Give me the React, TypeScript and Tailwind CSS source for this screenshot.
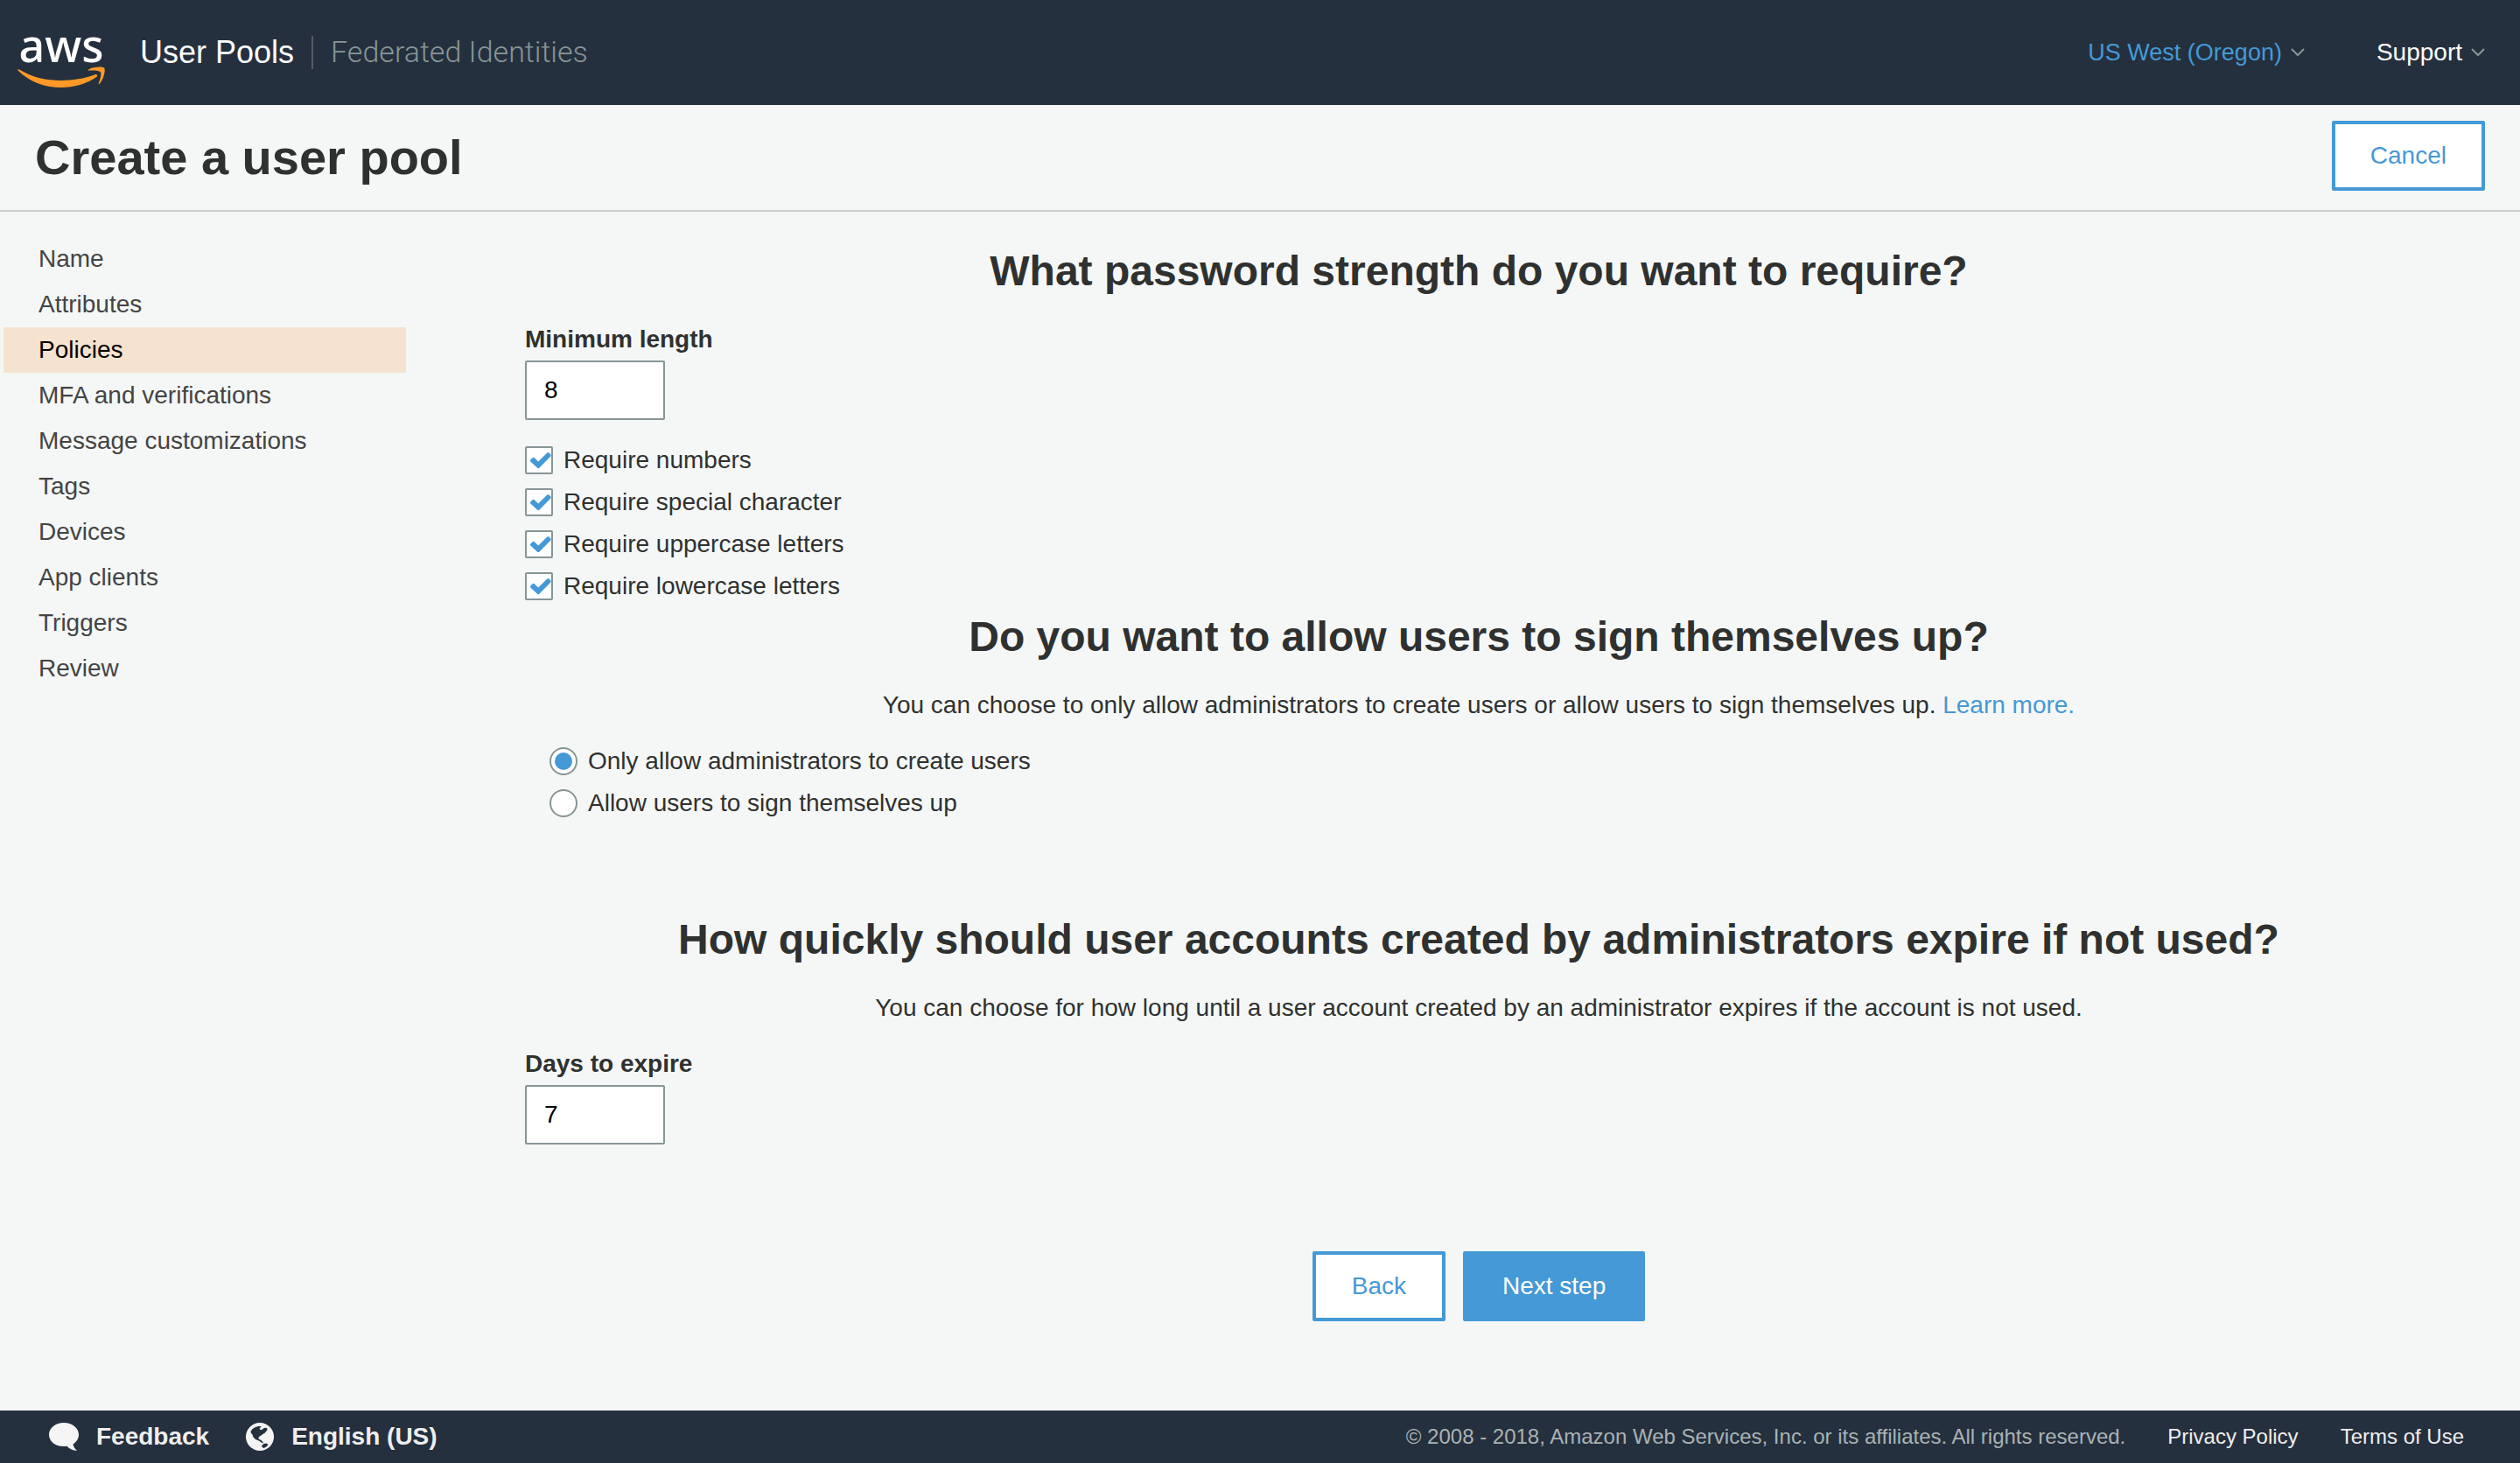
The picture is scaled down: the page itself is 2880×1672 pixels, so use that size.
import React, { useState } from 'react';

const steps = [
  'Name',
  'Attributes',
  'Policies',
  'MFA and verifications',
  'Message customizations',
  'Tags',
  'Devices',
  'App clients',
  'Triggers',
  'Review',
];

const passwordRules = [
  'Require numbers',
  'Require special character',
  'Require uppercase letters',
  'Require lowercase letters',
];

const signUpOptions = [
  'Only allow administrators to create users',
  'Allow users to sign themselves up',
];

function Chevron() {
  return (
    <svg viewBox="0 0 16 10" className="h-[10px] w-4" fill="none" stroke="#879596" strokeWidth="2" aria-hidden="true">
      <path d="M1 1l7 7 7-7" />
    </svg>
  );
}

function AwsLogo() {
  return (
    <a href="#home" aria-label="AWS home">
      <svg viewBox="0 -24 100 88" className="h-[88px] w-[100px]" aria-hidden="true">
        <text x="50" y="31" textAnchor="middle" fontFamily="'Noto Sans', 'Open Sans', sans-serif" fontWeight="500" fontSize="52" fill="#fff">
          aws
        </text>
        <g fill="#ff9926" transform="translate(0 -2)">
          <path d="M0.500 42.500C0 41.400 1 40.900 2 41.500C17 50.500 33 54 50 54C63 54 76 52 88.500 47.300C90.600 46.500 92.300 48.500 90.300 50C79 58 64 62 50 62C30.500 62 13 55 0.500 42.500Z" />
          <path d="M82 42.600C81 43.300 80.500 42.200 81.500 41.300C86 38.200 97.500 37.700 99.200 39.800C100.800 42 98.700 52.500 94 57.500C93.200 58.300 92.200 58 92.700 56.900C94.200 53.500 96.300 46.500 95 44.400C93.500 42.200 85.500 42.200 82 42.600Z" />
        </g>
      </svg>
    </a>
  );
}

function NumberField({ id, label, initial }: { id: string; label: string; initial: string }) {
  const [value, setValue] = useState(initial);
  return (
    <div className="flex flex-col items-start gap-1">
      <label htmlFor={id} className="font-bold leading-10">
        {label}
      </label>
      <input
        id={id}
        type="text"
        inputMode="numeric"
        value={value}
        onChange={(e) => setValue(e.target.value)}
        className="h-[68px] w-40 rounded-xs border-2 border-[#879596] bg-white px-5 text-black outline-none"
      />
    </div>
  );
}

function CheckRow({ label }: { label: string }) {
  const [on, setOn] = useState(true);
  return (
    <label className="flex h-12 items-center gap-3">
      <span className="grid size-8">
        <input
          type="checkbox"
          checked={on}
          onChange={() => setOn(!on)}
          className="col-start-1 row-start-1 size-8 appearance-none rounded-xs border-2 border-[#879596] bg-white"
        />
        {on && (
          <svg viewBox="0 0 32 32" className="pointer-events-none col-start-1 row-start-1 size-8" aria-hidden="true">
            <path
              d="M6.300 15.600L8.600 13.200Q9.600 12.400 10.700 13.200L15.200 17.600L25.300 7.600Q26.500 6.700 27.600 7.600L29.400 9.400Q30.100 10.500 29.400 11.600L16.300 24.800Q15.200 25.700 14.100 24.800L6.300 17.400Q5.600 16.500 6.300 15.600Z"
              fill="#4499d6"
            />
          </svg>
        )}
      </span>
      {label}
    </label>
  );
}

function Heading({ children }: { children: React.ReactNode }) {
  return <h2 className="text-center text-5xl/[60px] font-bold">{children}</h2>;
}

export default function App() {
  const [signUp, setSignUp] = useState(0);

  return (
    <div className="flex min-h-screen flex-col bg-[#f5f7f6] font-['Liberation_Sans',Arial,sans-serif] text-[28px] leading-10 text-[#2f3130]">
      <header className="flex h-[120px] items-center bg-[#25303e] pr-10 pl-5 text-white">
        <AwsLogo />
        <nav className="ml-10 flex items-center text-4xl">
          <a href="#user-pools">User Pools</a>
          <a href="#federated" className="ml-5 border-l-2 border-[#545b64] pl-5 font-['Roboto',sans-serif] text-[34px] font-light text-[#879596]">
            Federated Identities
          </a>
        </nav>
        <div className="ml-auto flex items-center gap-[82px]">
          <button type="button" className="flex items-center gap-2.5 text-[27px] text-[#4499d6]">
            US West (Oregon)
            <Chevron />
          </button>
          <button type="button" className="flex items-center gap-2.5">
            Support
            <Chevron />
          </button>
        </div>
      </header>

      <div className="flex items-start justify-between border-b-2 border-[#c9cccb] px-10 pt-[18px] pb-[18px]">
        <h1 className="text-[56px] leading-[84px] font-bold">Create a user pool</h1>
        <button type="button" className="h-20 rounded-xs border-4 border-[#4499d6] bg-white px-10 text-[#4499d6]">
          Cancel
        </button>
      </div>

      <div className="flex grow">
        <nav aria-label="Steps" className="w-[500px] shrink-0 pt-7 pr-9 pl-1">
          <ul>
            {steps.map((s) => (
              <li key={s}>
                <a
                  href={'#' + s.toLowerCase().replace(/ /g, '-')}
                  aria-current={s === 'Policies' ? 'step' : undefined}
                  className={
                    s === 'Policies'
                      ? 'block bg-[#f6e3cf] pl-10 leading-[52px] text-black'
                      : 'block pl-10 leading-[52px] text-[#444444]'
                  }
                >
                  {s}
                </a>
              </li>
            ))}
          </ul>
        </nav>

        <main className="grow px-[100px] pt-[38px] pb-[98px]">
          <Heading>What password strength do you want to require?</Heading>
          <div className="pt-7">
            <NumberField id="min-length" label="Minimum length" initial="8" />
          </div>
          <div className="flex flex-col items-start pt-[22px] pb-1">
            {passwordRules.map((r) => (
              <CheckRow key={r} label={r} />
            ))}
          </div>

          <Heading>Do you want to allow users to sign themselves up?</Heading>
          <p className="pt-7 text-center">
            You can choose to only allow administrators to create users or allow users to sign themselves up.{' '}
            <a href="#learn-more" className="text-[#4499d6]">
              Learn more.
            </a>
          </p>
          <div role="radiogroup" aria-label="Sign-up policy" className="flex flex-col items-start pt-5 pl-7">
            {signUpOptions.map((o, i) => (
              <label key={o} className="flex h-12 items-center gap-3">
                <input
                  type="radio"
                  name="sign-up"
                  checked={signUp === i}
                  onChange={() => setSignUp(i)}
                  className="grid size-8 appearance-none place-items-center rounded-full border-2 border-[#879596] bg-white before:size-5 before:rounded-full checked:before:bg-[#4499d6]"
                />
                {o}
              </label>
            ))}
          </div>

          <div className="pt-[102px]">
            <Heading>How quickly should user accounts created by administrators expire if not used?</Heading>
          </div>
          <p className="pt-7 text-center">
            You can choose for how long until a user account created by an administrator expires if the account is not used.
          </p>
          <div className="pt-6">
            <NumberField id="days-to-expire" label="Days to expire" initial="7" />
          </div>

          <div className="flex justify-center gap-5 pt-[122px]">
            <button type="button" className="h-20 rounded-xs border-4 border-[#4499d6] bg-white px-[41px] text-[#4499d6]">
              Back
            </button>
            <button type="button" className="h-20 rounded-xs border-4 border-[#4499d6] bg-[#4499d6] px-[41px] text-white">
              Next step
            </button>
          </div>
        </main>
      </div>

      <footer className="flex h-[60px] items-center bg-[#25303e] pr-16 pl-14 text-[#eeeeee]">
        <button type="button" className="flex items-center gap-5 font-bold">
          <svg viewBox="0 0 34 32" className="h-8 w-[34px]" fill="#f5f5f5" aria-hidden="true">
            <path d="M17 0C26.500 0 34 6 34 13.500C34 18 31.500 22 27.500 24.500C28 27.500 29.500 30 32 31.500C28.500 32.500 23.500 30 20.500 26.800C8.500 28.500 0 22 0 13.500C0 6 7.500 0 17 0Z" />
          </svg>
          Feedback
        </button>
        <button type="button" className="ml-[42px] flex items-center gap-5 font-bold">
          <svg viewBox="0 0 32 32" className="size-8" aria-hidden="true">
            <circle cx="16" cy="16" r="16" fill="#f5f5f5" />
            <path
              fill="#25303e"
              d="M5.500 10C7.500 6 12 3.500 17 4C18 5 16 5.500 15.500 7C16.500 8.500 18.500 8.500 19.500 7C21 5.500 23 5.500 24.500 6.500C25 9 22.500 10 21.500 12C19.500 12.500 18.500 14 16.500 15C15 16 14 17 14.500 18.500C16.500 19 19.500 21 20 23.500C18 23.500 16 20.500 13.500 20C10 19 8 16.500 7.500 13.500C6.500 12.500 5.500 11.500 5.500 10Z"
            />
            <path fill="#25303e" d="M18 27C18.500 24.500 21 23.500 23.500 23.500L25.500 25C24.500 27 22 28.500 20 29Z" />
          </svg>
          English (US)
        </button>
        <div className="ml-auto flex items-center gap-12 text-2xl">
          <span className="text-[#a9b3b3]">
            © 2008 - 2018, Amazon Web Services, Inc. or its affiliates. All rights reserved.
          </span>
          <a href="#privacy">Privacy Policy</a>
          <a href="#terms">Terms of Use</a>
        </div>
      </footer>
    </div>
  );
}
